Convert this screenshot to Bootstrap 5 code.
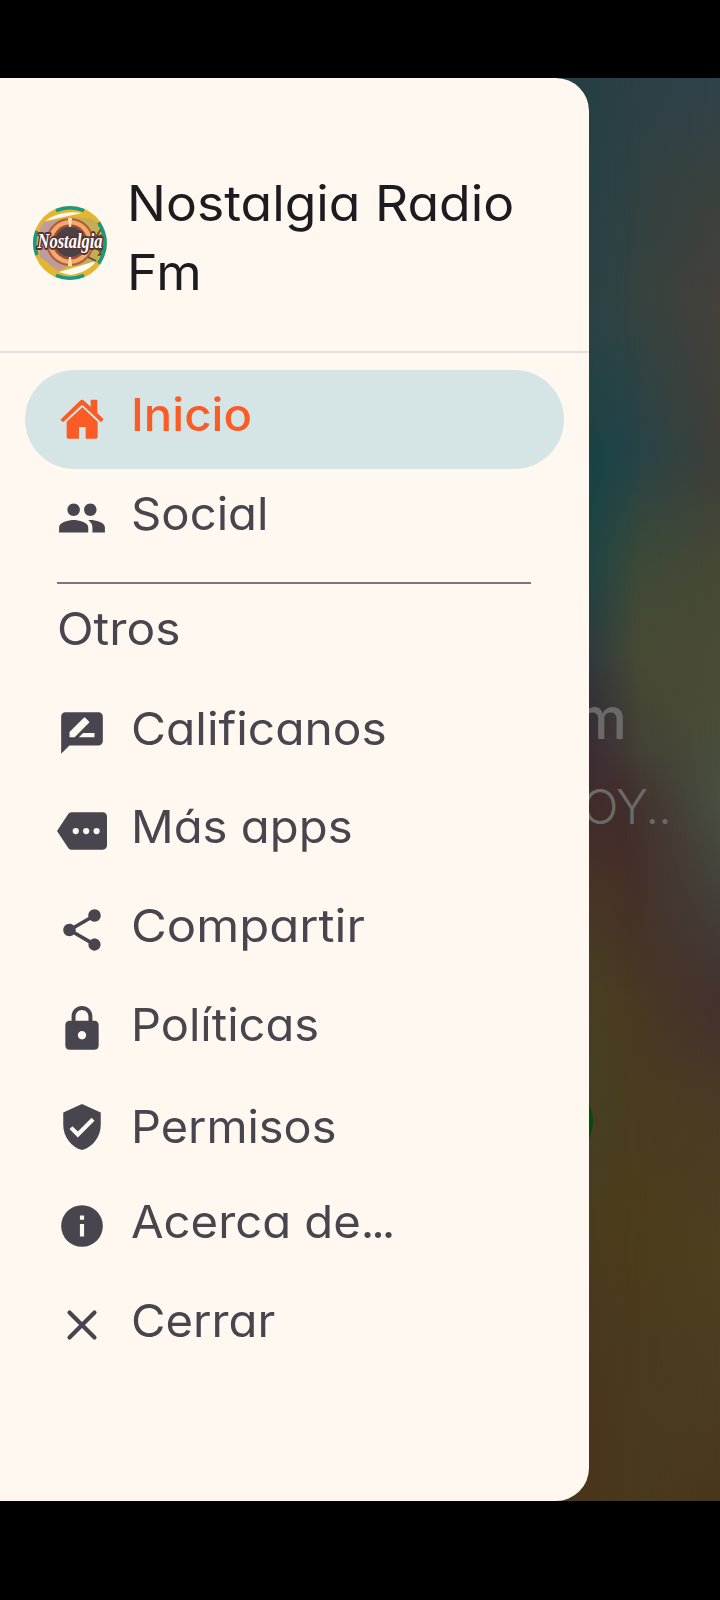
<!DOCTYPE html>
<html lang="es">
<head>
<meta charset="utf-8">
<meta name="viewport" content="width=device-width, initial-scale=1">
<title>Nostalgia Radio Fm</title>
<link rel="stylesheet" href="https://cdn.jsdelivr.net/npm/bootstrap@5.3.0/dist/css/bootstrap.min.css">
<style>
body{background:#000;font-family:Inter,"Open Sans",sans-serif;font-feature-settings:"cv11","ss03";overflow:hidden}
.screen{height:1423px;margin-top:78px}
.player{background:linear-gradient(#263f44 0,#2a4245 252px,#174244 392px,#1d4445 482px,#2c3a40 572px,#332f38 625px,#3d2a36 672px,#422b2b 722px,#432f28 760px,#483626 822px,#4a3f22 922px,#444022 1032px,#4a3d1e 1122px,#4a391d 1222px,#49351b 1372px)}
.player::before,.player::after{content:"";position:absolute;inset:0}
.player::before{background:linear-gradient(#2d4046 0,#344340 222px,#24444a 372px,#3b4a38 482px,#484b34 572px,#433f34 672px,#412f2d 722px,#452c2a 772px,#463424 872px,#4a3a22 922px,#4c3d1b 1122px,#4a3a1e 1322px);-webkit-mask-image:linear-gradient(90deg,transparent 585px,#000 640px);mask-image:linear-gradient(90deg,transparent 585px,#000 640px)}
.player::after{background:linear-gradient(#30414a 0,#3b413c 122px,#45403a 222px,#3f3f38 392px,#454835 482px,#4a4c37 622px,#485040 722px,#43403a 822px,#44302f 922px,#4a3a25 1022px,#4d401f 1172px,#4b3c20 1322px,#49371c 1412px);-webkit-mask-image:linear-gradient(90deg,transparent 625px,#000 720px);mask-image:linear-gradient(90deg,transparent 625px,#000 720px)}
.track{color:#6b6a68;padding-top:604px;z-index:1}
.song{font-size:58px;font-weight:500;line-height:72px;padding-right:93px}
.artist{font-size:48px;font-weight:350;line-height:60px;letter-spacing:-.8px;padding:23px 49px 0 0}
.play{width:80px;height:80px;background:#08490f;margin:244px 0 0 513px}
.drawer{width:589px;background:#fff8f1;border-radius:0 33px 33px 0;z-index:2;color:#49454f}
.brand{height:275px;padding:91px 0 0 32px;border-bottom:2px solid #e6e1dc}
.brand h1{font-size:49px;line-height:69px;color:#1d1b20;font-weight:400;margin-left:19px}
.logo{width:76px;height:76px;margin-top:36px}
.menu{padding:17px 25px 0}
.item{height:98.7px;padding-left:32px;font-size:45px;line-height:54px;color:#49454f;white-space:nowrap}
.item svg{width:50px;height:50px;fill:currentColor;flex:none;margin-right:24px}
.item>span{position:relative;top:-4px}
.item.active{background:#d5e5e5;color:#fb5b25;border-radius:50px;font-weight:500}
.rule{height:2px;background:#7a767e;margin:15px 33px 0 32px}
.group{height:99px;font-size:45px;line-height:54px;padding:18px 0 0 32px}
/* wide, geometric lettering */
.wide{display:inline-block;transform-origin:0 50%;white-space:nowrap}
.t1{transform:scaleX(1.054)}
.t2{transform:scaleX(1.06)}
.s1,.s2,.s5,.s10{transform:scaleX(1.05)}
.s3,.s4{transform:scaleX(1.064)}
.s6{transform:scaleX(1.09)}
.s7{transform:scaleX(1.045)}
.s8{transform:scaleX(1.042)}
.s9{transform:scaleX(1.05)}
.item>.s8{top:0}
.dots{letter-spacing:-3px}
</style>
</head>
<body>
<main class="screen position-relative overflow-hidden">
  <section class="player position-absolute top-0 start-0 w-100 h-100">
    <div class="track position-relative">
      <div class="song text-end">m</div>
      <div class="artist text-end">OY..</div>
      <div class="play rounded-circle"></div>
    </div>
  </section>
  <aside class="drawer position-absolute top-0 start-0 h-100">
    <header class="brand d-flex">
      <svg class="logo flex-shrink-0 overflow-visible" viewBox="0 0 76 76">
        <defs><clipPath id="disc"><circle cx="38" cy="38" r="33.5"/></clipPath></defs>
        <circle cx="38" cy="38" r="37" fill="#e4b62f"/>
        <g fill="none" stroke="#169a85" stroke-width="3.600">
          <path d="M24 5.600Q38-.2 52 5.600M24 70.400Q38 76.200 52 70.400"/>
          <path d="M66.500 17.500Q79.500 38 66.500 58.500M5 26Q.5 38 5 50"/>
        </g>
        <g clip-path="url(#disc)">
          <path d="M8 18L40 12V60L26 66L8 52Z" fill="#bf9b9b"/>
          <path d="M38 12L66 14V56L44 62Z" fill="#c5ad58"/>
          <path d="M13 16Q28 5 50 8L27 13ZM27 67L64 56Q57 67 38 70Z" fill="#fffaf0"/>
          <circle cx="38" cy="37" r="24" fill="#b4593a"/>
          <circle cx="38" cy="37" r="22" fill="#f1a96c"/>
          <circle cx="38" cy="37" r="17.500" fill="#9b4b33"/>
          <circle cx="38" cy="37" r="15" fill="#494247"/>
          <path d="M36 13h4l-1 9h-2zM36 61h4l-1-9h-2z" fill="#ffe2b3"/>
          <path d="M69 24l-5 8 6-2M66 46l4-2-3 6 4-1M56 52l8 4" fill="none" stroke="#5a4c36" stroke-width="1.800"/>
        </g>
        <text transform="translate(5.500 43) scale(1 1.250)" font-family="Liberation Serif,serif" font-style="italic" font-weight="700" font-size="16.500" fill="#fff" stroke="#573333" stroke-width="3" paint-order="stroke" stroke-linejoin="round">Nostalgia</text>
      </svg>
      <h1 class="mb-0"><span class="wide t1">Nostalgia Radio</span><br><span class="wide t2">Fm</span></h1>
    </header>
    <nav class="menu">
      <a class="item active d-flex align-items-center text-decoration-none" href="#">
        <svg viewBox="111 103 150 150"><path d="M187 143L233 186V232Q233 237 228 237H197V202H177V237H145Q140 237 140 232V186Z"/><path d="M121 180L180 123Q186 118 192 123L212 141V122Q212 120 214 120H230Q232 120 232 122V160L251 179L243 188L191 139Q187 135 182 139L129 188Z"/></svg>
        <span class="wide s1">Inicio</span></a>
      <a class="item d-flex align-items-center text-decoration-none" href="#">
        <svg viewBox="0 0 24 24"><path d="M16 11c1.660 0 2.990-1.340 2.990-3S17.660 5 16 5s-3 1.340-3 3 1.340 3 3 3zm-8 0c1.660 0 2.990-1.340 2.990-3S9.660 5 8 5 5 6.340 5 8s1.340 3 3 3zm0 2c-2.330 0-7 1.170-7 3.500V19h14v-2.500c0-2.330-4.670-3.500-7-3.500zm8 0c-.29 0-.62.02-.97.05 1.160.84 1.970 1.970 1.970 3.450V19h6v-2.500c0-2.330-4.670-3.500-7-3.500z"/></svg>
        <span class="wide s2">Social</span></a>
      <div class="rule"></div>
      <div class="group"><span class="wide s3">Otros</span></div>
      <a class="item d-flex align-items-center text-decoration-none" href="#">
        <svg viewBox="0 0 24 24"><path fill-rule="evenodd" d="M20 2H4c-1.100 0-2 .9-2 2v18l4-4h14c1.100 0 2-.9 2-2V4c0-1.100-.9-2-2-2zM6 14v-2.470l6.880-6.880c.2-.2.510-.2.710 0l1.770 1.770c.2.200.2.510 0 .710L8.470 14H6zm12 0h-7.500l2-2H18v2z"/></svg>
        <span class="wide s4">Calificanos</span></a>
      <a class="item d-flex align-items-center text-decoration-none" href="#">
        <svg viewBox="0 0 24 24"><path fill-rule="evenodd" d="M22 3H7c-.69 0-1.230.35-1.590.88L0 12l5.410 8.110c.36.530.970.890 1.660.890H22c1.100 0 2-.9 2-2V5c0-1.100-.9-2-2-2zM9 13.500a1.500 1.500 0 1 1 0-3 1.500 1.500 0 0 1 0 3zm5 0a1.500 1.500 0 1 1 0-3 1.500 1.500 0 0 1 0 3zm5 0a1.500 1.500 0 1 1 0-3 1.500 1.500 0 0 1 0 3z"/></svg>
        <span class="wide s5">Más apps</span></a>
      <a class="item d-flex align-items-center text-decoration-none" href="#">
        <svg viewBox="0 0 24 24"><path d="M18 16.080c-.76 0-1.440.3-1.960.77L8.910 12.700c.05-.23.090-.46.090-.7s-.04-.47-.09-.7l7.050-4.110c.54.500 1.250.810 2.040.810 1.660 0 3-1.340 3-3s-1.340-3-3-3-3 1.340-3 3c0 .24.040.47.090.7L8.040 9.810C7.500 9.310 6.790 9 6 9c-1.660 0-3 1.340-3 3s1.340 3 3 3c.79 0 1.500-.31 2.040-.81l7.120 4.160c-.05.21-.08.43-.08.65 0 1.610 1.310 2.920 2.920 2.920s2.920-1.310 2.920-2.920-1.310-2.920-2.920-2.920z"/></svg>
        <span class="wide s6">Compartir</span></a>
      <a class="item d-flex align-items-center text-decoration-none" href="#">
        <svg viewBox="0 0 24 24"><path fill-rule="evenodd" d="M18 8h-1V6c0-2.760-2.240-5-5-5S7 3.240 7 6v2H6c-1.100 0-2 .9-2 2v10c0 1.100.9 2 2 2h12c1.100 0 2-.9 2-2V10c0-1.100-.9-2-2-2zm-6 9c-1.100 0-2-.9-2-2s.9-2 2-2 2 .9 2 2-.9 2-2 2zM8.900 8V6c0-1.710 1.390-3.100 3.100-3.100s3.100 1.390 3.100 3.100v2z"/></svg>
        <span class="wide s7">Políticas</span></a>
      <a class="item d-flex align-items-center text-decoration-none" href="#">
        <svg viewBox="0 0 24 24"><path fill-rule="evenodd" d="M12 1L3 5v6c0 5.550 3.840 10.740 9 12 5.160-1.260 9-6.450 9-12V5l-9-4zm-2 16l-4-4 1.410-1.410L10 14.170l6.590-6.590L18 9l-8 8z"/></svg>
        <span class="wide s8">Permisos</span></a>
      <a class="item d-flex align-items-center text-decoration-none" href="#">
        <svg viewBox="0 0 24 24"><path fill-rule="evenodd" d="M12 2a10 10 0 1 0 0 20 10 10 0 0 0 0-20zm1 15h-2v-6h2v6zm0-8h-2V7h2v2z"/></svg>
        <span class="wide s9">Acerca de<span class="dots">...</span></span></a>
      <a class="item d-flex align-items-center text-decoration-none" href="#">
        <svg viewBox="0 0 24 24"><path d="M6 6L18 18M18 6L6 18" fill="none" stroke="currentColor" stroke-width="2" stroke-linecap="round"/></svg>
        <span class="wide s10">Cerrar</span></a>
    </nav>
  </aside>
</main>
<script src="https://cdn.jsdelivr.net/npm/bootstrap@5.3.0/dist/js/bootstrap.bundle.min.js"></script>
</body>
</html>
